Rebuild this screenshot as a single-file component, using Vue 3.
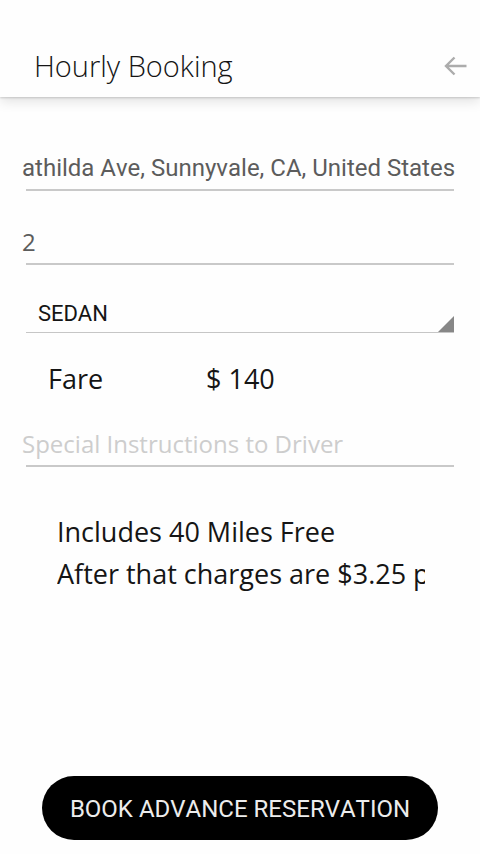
<script setup>
import { ref } from 'vue'

const address = ref('athilda Ave, Sunnyvale, CA, United States')
const hours = ref('2')
const carType = ref('SEDAN')
const instructions = ref('')
const fare = ref(140)

const notes = ref(['Includes 40 Miles Free', 'After that charges are $3.25 p'])
</script>

<template>
  <div class="booking-page">
    <header class="booking-header">
      <h1 class="booking-title">Hourly Booking</h1>
      <button class="back-button" type="button" aria-label="Back">
        <svg width="24" height="20" viewBox="0 0 24 20" fill="none" stroke="#acacac" stroke-width="2.4">
          <path d="M2 10H22.5M10.5 1.5L2 10L10.5 18.5" />
        </svg>
      </button>
    </header>

    <form class="booking-form" @submit.prevent>
      <input v-model="address" class="field field-address" type="text" aria-label="Address" />
      <input v-model="hours" class="field field-hours" type="text" aria-label="Hours" />

      <div class="select-block">
        <select v-model="carType" class="select-car" aria-label="Car type">
          <option>SEDAN</option>
        </select>
      </div>

      <div class="fare-row">
        <span class="fare-label">Fare</span>
        <span>$ {{ fare }}</span>
      </div>

      <input
        v-model="instructions"
        class="field field-instructions"
        type="text"
        placeholder="Special Instructions to Driver"
        aria-label="Special Instructions to Driver"
      />

      <div class="notes">
        <p v-for="note in notes" :key="note" class="note">{{ note }}</p>
      </div>

      <button class="book-button" type="submit">BOOK ADVANCE RESERVATION</button>
    </form>
  </div>
</template>

<style>
body {
  background: #fefefe;
}
</style>

<style scoped>
.booking-page {
  display: flex;
  flex-direction: column;
  min-height: 100vh;
  font-family: 'Open Sans', 'Noto Sans', sans-serif;
  color: #151515;
}

.booking-header {
  display: flex;
  align-items: center;
  justify-content: space-between;
  box-sizing: border-box;
  height: 97px;
  padding: 34px 12px 0 34px;
  background: #fefefe;
  box-shadow:
    0 1px 2px rgba(0, 0, 0, 0.16),
    0 4px 12px rgba(0, 0, 0, 0.12);
}

.booking-title {
  margin: 0;
  font-size: 29px;
  font-weight: 300;
  line-height: 40px;
}

.back-button {
  display: flex;
  padding: 0;
  border: 0;
  background: none;
}

.booking-form {
  display: flex;
  flex: 1;
  flex-direction: column;
  padding: 50px 22px 14px;
}

/* the underline is a little shorter than the text area */
.field {
  box-sizing: border-box;
  width: 100%;
  height: 44px;
  padding: 0 0 4px;
  border: 0;
  outline: 0;
  background: linear-gradient(#c9c9c9, #c9c9c9) center bottom / calc(100% - 8px) 2px no-repeat;
  font-family: inherit;
  font-size: 24px;
  color: #5c5c5c;
}

.field::placeholder {
  color: #cdcdcd;
  opacity: 1;
}

.field-address {
  padding-bottom: 2px;
  font-family: Roboto, sans-serif;
  font-kerning: none;
}

.field-hours {
  margin-top: 30px;
}

.select-block {
  position: relative;
  margin: 28px 4px 0;
  border-bottom: 1px solid #c6c6c6;
}

.select-block::after {
  position: absolute;
  right: 0;
  bottom: 0;
  width: 16px;
  height: 16px;
  background: #878787;
  clip-path: polygon(100% 0, 100% 100%, 0 100%);
  content: '';
  pointer-events: none;
}

.select-car {
  display: block;
  width: 100%;
  height: 39px;
  padding: 2px 12px 0;
  border: 0;
  outline: 0;
  appearance: none;
  background: none;
  font-family: Roboto, sans-serif;
  font-size: 22px;
  color: #151515;
}

.fare-row {
  display: flex;
  margin: 26px 26px 0;
  font-size: 27px;
  line-height: 40px;
}

.fare-label {
  width: 158px;
}

.field-instructions {
  margin-top: 24px;
}

.notes {
  margin: 44px 33px 40px 35px;
}

.note {
  margin: 0;
  overflow: hidden;
  font-size: 27px;
  line-height: 42px;
  white-space: nowrap;
}

.book-button {
  height: 64px;
  margin: auto 20px 0;
  padding: 2px 6px 0;
  border: 0;
  border-radius: 32px;
  background: #000;
  font-family: Roboto, sans-serif;
  font-size: 24px;
  font-kerning: none;
  color: #ececec;
}
</style>
